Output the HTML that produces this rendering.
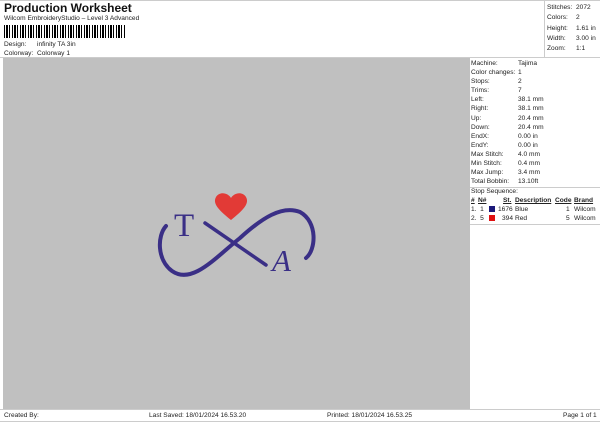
<html><head><style>
body{margin:0;width:600px;height:424px;background:#fff;font-family:"Liberation Sans",sans-serif;font-size:6.6px;color:#222;position:relative;overflow:hidden}
.a{position:absolute;white-space:nowrap}
</style></head><body>
<div class="a" style="left:4px;top:1px;font-size:12px;font-weight:bold;color:#111">Production Worksheet</div>
<div class="a" style="left:4px;top:15px">Wilcom EmbroideryStudio – Level 3 Advanced</div>
<div class="a" style="left:4px;top:25px;width:122px;height:13px;background:repeating-linear-gradient(90deg,#000 0 1px,#fff 1px 2px,#000 2px 4px,#fff 4px 5px,#000 5px 6px,#fff 6px 8px)"></div>
<div class="a" style="left:4px;top:41px">Design:</div><div class="a" style="left:37px;top:41px">infinity TA 3in</div>
<div class="a" style="left:4px;top:50px">Colorway:</div><div class="a" style="left:37px;top:50px">Colorway 1</div>
<div class="a" style="left:0;top:0;width:600px;height:1px;background:#ccc"></div>
<div class="a" style="left:544px;top:0;width:1px;height:57px;background:#ccc"></div>
<div class="a" style="left:547px;top:3px;line-height:10.3px">Stitches:<br>Colors:<br>Height:<br>Width:<br>Zoom:</div>
<div class="a" style="left:576px;top:3px;line-height:10.3px">2072<br>2<br>1.61 in<br>3.00 in<br>1:1</div>
<div class="a" style="left:3px;top:58px;width:464px;height:351px;background:#c0c0c0"></div>
<div class="a" style="left:467px;top:58px;width:3px;height:351px;background:#c0c0c0"></div>
<div class="a" style="left:0;top:57px;width:600px;height:1px;background:#ccc"></div>
<div class="a" style="left:471px;top:59px;line-height:9.1px">Machine:<br>Color changes:<br>Stops:<br>Trims:<br>Left:<br>Right:<br>Up:<br>Down:<br>EndX:<br>EndY:<br>Max Stitch:<br>Min Stitch:<br>Max Jump:<br>Total Bobbin:</div>
<div class="a" style="left:518px;top:59px;line-height:9.1px">Tajima<br>1<br>2<br>7<br>38.1 mm<br>38.1 mm<br>20.4 mm<br>20.4 mm<br>0.00 in<br>0.00 in<br>4.0 mm<br>0.4 mm<br>3.4 mm<br>13.10ft</div>
<div class="a" style="left:470px;top:187px;width:130px;height:1px;background:#ccc"></div>
<div class="a" style="left:471px;top:188px">Stop Sequence:</div>
<div class="a" style="left:471px;top:197px;font-weight:bold;text-decoration:underline">#</div>
<div class="a" style="left:478px;top:197px;font-weight:bold;text-decoration:underline">N#</div>
<div class="a" style="left:503px;top:197px;font-weight:bold;text-decoration:underline">St.</div>
<div class="a" style="left:515px;top:197px;font-weight:bold;text-decoration:underline">Description</div>
<div class="a" style="left:555px;top:197px;font-weight:bold;text-decoration:underline">Code</div>
<div class="a" style="left:574px;top:197px;font-weight:bold;text-decoration:underline">Brand</div>
<div class="a" style="left:471px;top:206px">1.&nbsp; 1</div><div class="a" style="left:489px;top:206px;width:6px;height:6px;background:#1c1a7a"></div><div class="a" style="left:498px;top:206px">1676</div><div class="a" style="left:515px;top:206px">Blue</div><div class="a" style="left:566px;top:206px">1</div><div class="a" style="left:574px;top:206px">Wilcom</div>
<div class="a" style="left:471px;top:215px">2.&nbsp; 5</div><div class="a" style="left:489px;top:215px;width:6px;height:6px;background:#e01010"></div><div class="a" style="left:502px;top:215px">394</div><div class="a" style="left:515px;top:215px">Red</div><div class="a" style="left:566px;top:215px">5</div><div class="a" style="left:574px;top:215px">Wilcom</div>
<div class="a" style="left:470px;top:224px;width:130px;height:1px;background:#ccc"></div>
<div class="a" style="left:0;top:409px;width:600px;height:1px;background:#ccc"></div>
<div class="a" style="left:0;top:421px;width:600px;height:1px;background:#ccc"></div>
<div class="a" style="left:4px;top:412px">Created By:</div>
<div class="a" style="left:149px;top:412px">Last Saved: 18/01/2024 16.53.20</div>
<div class="a" style="left:327px;top:412px">Printed: 18/01/2024 16.53.25</div>
<div class="a" style="left:563px;top:412px">Page 1 of 1</div>
<svg class="a" style="left:0;top:0" width="600" height="424">
<g fill="none" stroke="#3a2f86" stroke-linecap="round">
<path d="M166 226 C157 236 157 260 172 271 C192 285 215 258 240 238 C262 218 282 205 300 212 C318 222 316 250 306 258" stroke-width="4"/>
<path d="M205 223 L266 265" stroke-width="3.5"/>
</g>
<text x="174" y="236" font-family="Liberation Serif,serif" font-size="33" fill="#3a2f86">T</text>
<text x="272" y="271" font-family="Liberation Serif,serif" font-size="31" font-style="italic" fill="#3a2f86">A</text>
<path d="M231 220 C220 211 212 204 216 197 C220 191 228 193 231 198 C234 193 242 191 246 197 C250 204 242 211 231 220Z" fill="#e23a36"/>
</svg>
</body></html>
